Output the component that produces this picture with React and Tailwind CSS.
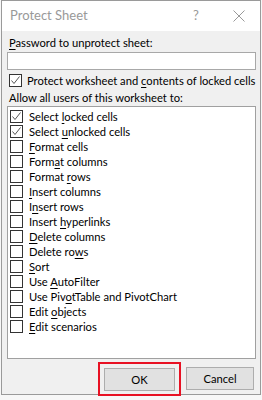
import React from "react";

const items = [
    ["Select locked cells", 7, true],
    ["Select unlocked cells", 7, true],
    ["Format cells", 0, false],
    ["Format columns", 4, false],
    ["Format rows", 7, false],
    ["Insert columns", 0, false],
    ["Insert rows", 1, false],
    ["Insert hyperlinks", 7, false],
    ["Delete columns", 0, false],
    ["Delete rows", 9, false],
    ["Sort", 0, false],
    ["Use AutoFilter", 4, false],
    ["Use PivotTable and PivotChart", 7, false],
    ["Edit objects", 5, false],
    ["Edit scenarios", 0, false],
];

const Key = ({ text, at }) => (
    <span className="whitespace-nowrap">
        {text.slice(0, at)}
        <span className="underline underline-offset-2">{text[at]}</span>
        {text.slice(at + 1)}
    </span>
);

const Box = ({ checked }) => (
    <span className="w-[13px] h-[13px] border border-[#333] bg-white flex items-center justify-center shrink-0">
        {checked && (
            <svg width="11" height="11" viewBox="0 0 11 11">
                <path d="M1.5 5.5 L4 8.5 L9.5 1.5" fill="none" stroke="#555" strokeWidth="1" />
            </svg>
        )}
    </span>
);

const App = () => {
    return (
        <div className="w-[262px] h-[400px] bg-[#f7f7f7] font-['Lato',sans-serif] text-[11.2px] text-black overflow-hidden">
            <div className="w-[260px] h-[395px] ml-[1px] border border-[#9a9a9a] bg-[#f0f0f0] flex flex-col">
                <div className="h-[30px] shrink-0 bg-white flex items-center pl-[8px] pr-[15px] text-[#999] text-[13px]">
                    <span className="flex-1">Protect Sheet</span>
                    <span className="w-[10px] mr-[32px] text-center">?</span>
                    <svg width="12" height="12" viewBox="0 0 12 12">
                        <path d="M0.5 0.5 L11.5 11.5 M11.5 0.5 L0.5 11.5" stroke="#999" strokeWidth="1" />
                    </svg>
                </div>
                <div className="flex flex-col pl-[5px] pr-[4px] pt-[4px] leading-[15px]">
                    <div className="pl-[2px]"><Key text="Password to unprotect sheet:" at={0} /></div>
                    <div className="mt-[2px] h-[18px] border border-[#a8a8a8] bg-white" />
                    <div className="mt-[3px] flex items-center gap-[5px] pl-[2px]">
                        <Box checked />
                        <Key text="Protect worksheet and contents of locked cells" at={22} />
                    </div>
                    <div className="mt-[2px] pl-[2px]">Allow all users of this worksheet to:</div>
                    <div className="mt-[1px] h-[253px] border border-[#a0a0a0] bg-white pt-[2px] pl-[2px]">
                        {items.map(([t, k, c]) => (
                            <div key={t} className="h-[15px] flex items-center gap-[6px]">
                                <Box checked={c} />
                                <Key text={t} at={k} />
                            </div>
                        ))}
                    </div>
                    <div className="mt-[3px] flex justify-end gap-[5px] pr-[2px]">
                        <div className="border-2 border-[#e81123] p-[4px] pb-[3px]">
                            <button className="w-[71px] h-[23px] border border-[#adadad] bg-[#e1e1e1] block">OK</button>
                        </div>
                        <button className="mt-[5px] w-[68px] h-[23px] border border-[#adadad] bg-[#e1e1e1]">Cancel</button>
                    </div>
                </div>
            </div>
        </div>
    );
};

export default App;
